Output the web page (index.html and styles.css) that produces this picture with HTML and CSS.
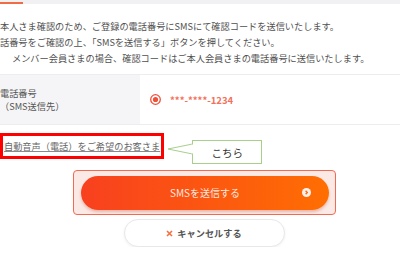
FILE: index.html
```html
<!DOCTYPE html>
<html>

<head>
    <meta charset="UTF-8">
    <title>SMS認証</title>
    <link rel="stylesheet" href="styles.css">
</head>

<body>
    <div class="tabs"><span class="tab-active"></span></div>

    <div class="intro">
        <p>本人さま確認のため、ご登録の電話番号にSMSにて確認コードを送信いたします。</p>
        <p>話番号をご確認の上、「SMSを送信する」ボタンを押してください。</p>
        <p class="note">メンバー会員さまの場合、確認コードはご本人会員さまの電話番号に送信いたします。</p>
    </div>

    <div class="field-row">
        <div class="field-label">電話番号<br>（SMS送信先）</div>
        <div class="field-value">
            <svg class="radio" width="11" height="11" viewBox="0 0 11 11">
                <circle cx="5.5" cy="5.5" r="4.8" fill="#fff" stroke="#f0503a" stroke-width="1.3" />
                <circle cx="5.5" cy="5.5" r="2.6" fill="#f0503a" />
            </svg>
            <span class="phone">***-****-1234</span>
        </div>
    </div>

    <div class="help-row">
        <a class="voice-link" href="#">自動音声（電話）をご希望のお客さま</a>
        <div class="callout">
            <svg class="pointer" width="27" height="14" viewBox="0 0 27 14">
                <polygon points="1,7 25.5,2 25.5,12" fill="#fff" stroke="#a9cf8c" stroke-width="1" />
                <rect x="24.5" y="2.6" width="2.5" height="8.8" fill="#fff" />
            </svg>
            こちら
        </div>
    </div>

    <div class="actions">
        <div class="send-ring">
            <button class="send-btn">
                SMSを送信する
                <svg class="arrow" width="9" height="9" viewBox="0 0 9 9">
                    <circle cx="4.5" cy="4.5" r="4.5" fill="#fff2ec" />
                    <polyline points="3.6,2.7 5.3,4.5 3.6,6.3" fill="none" stroke="#ff6a10" stroke-width="1.4" />
                </svg>
            </button>
        </div>
        <button class="cancel-btn">
            <svg width="7" height="7" viewBox="0 0 7 7">
                <path d="M1 1L6 6M6 1L1 6" stroke="#f4703f" stroke-width="1.6" />
            </svg>
            キャンセルする
        </button>
    </div>
</body>

</html>
```

FILE: styles.css
```css
html,
body {
    margin: 0;
    background: #fff;
    font-family: "Noto Sans CJK JP", "Noto Sans", sans-serif;
    color: #505050;
    font-size: 9.2px;
}

/* tab bar */
.tabs {
    height: 4px;
    background: #f1f1f4;
    display: flex;
    align-items: flex-end;
}

.tab-active {
    width: 23px;
    height: 2px;
    background: #f26b45;
}

/* intro text */
.intro {
    padding-top: 14px;
}

.intro p {
    margin: 0;
    line-height: 16px;
    white-space: nowrap;
}

.intro .note {
    padding-left: 12px;
}

/* phone row */
.field-row {
    margin-top: 8px;
    display: flex;
    height: 49px;
    border-top: 1px solid #ededef;
    border-bottom: 1px solid #ededef;
}

.field-label {
    width: 140px;
    background: #f5f5f7;
    display: flex;
    align-items: center;
    line-height: 12.5px;
    color: #555;
}

.field-value {
    flex: 1;
    display: flex;
    align-items: center;
    gap: 9px;
    padding-left: 10px;
}

.phone {
    color: #f4705a;
    font-size: 9.5px;
    font-weight: bold;
}

/* voice link + annotation */
.help-row {
    margin-top: 8px;
    display: flex;
    align-items: flex-start;
}

.voice-link {
    display: flex;
    align-items: center;
    height: 20px;
    padding: 0 1px;
    border: 3px solid #f00;
    color: #666;
    text-decoration: underline;
    text-decoration-color: #8a8a8a;
    white-space: nowrap;
}

.callout {
    position: relative;
    margin: 7px 0 0 28px;
    width: 68px;
    height: 22px;
    border: 1px solid #a9cf8c;
    background: #fff;
    display: flex;
    align-items: center;
    justify-content: center;
    font-size: 10.5px;
    color: #333;
}

.pointer {
    position: absolute;
    left: -26px;
    top: 1px;
}

/* buttons */
.actions {
    margin-top: 6px;
    padding-left: 8px;
    display: flex;
    flex-direction: column;
    align-items: center;
    gap: 4px;
}

.send-ring {
    border: 1.5px solid #f36a52;
    border-radius: 4px;
    background: #fbe9e5;
    padding: 4.5px 5.5px 4.5px 7.5px;
}

.send-btn {
    position: relative;
    display: flex;
    align-items: center;
    justify-content: center;
    width: 248px;
    height: 34px;
    border: none;
    border-radius: 17px;
    background: linear-gradient(90deg, #f8401f, #ff6e02);
    box-shadow: 0 2px 3px rgba(190, 60, 30, 0.3);
    color: rgba(255, 255, 255, 0.88);
    font-family: inherit;
    font-size: 10px;
    padding: 0;
}

.arrow {
    position: absolute;
    right: 18px;
    top: 12.5px;
}

.cancel-btn {
    display: flex;
    align-items: center;
    justify-content: center;
    gap: 4px;
    width: 161px;
    height: 28px;
    border: 1px solid #e8e8e8;
    border-radius: 14px;
    background: #fff;
    box-shadow: 0 1px 3px rgba(0, 0, 0, 0.06);
    color: #555;
    font-family: inherit;
    font-size: 9.2px;
    font-weight: bold;
    padding: 0;
}
```
